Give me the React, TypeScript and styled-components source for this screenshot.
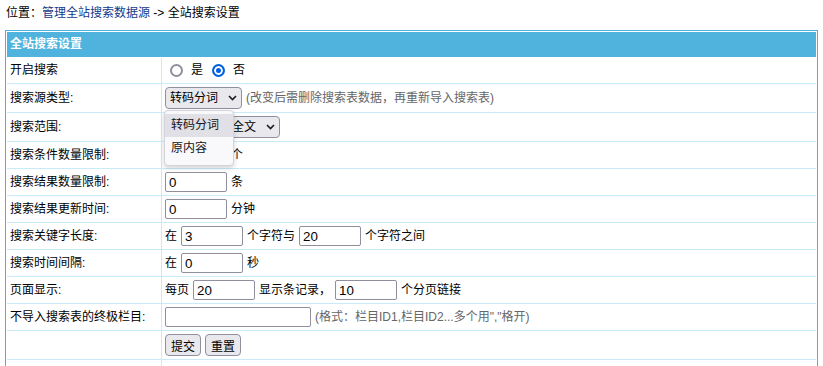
import React from "react";
import styled, { createGlobalStyle } from "styled-components";

const GlobalStyle = createGlobalStyle`
  html, body { margin: 0; padding: 0; background: #fff; }
  body {
    font-family: "Liberation Sans", "Noto Sans CJK SC", sans-serif;
    font-size: 12px;
    color: #000;
  }
  * { box-sizing: border-box; }
`;

const FONT = `"Liberation Sans", "Noto Sans CJK SC", sans-serif`;

const Page = styled.div`
  padding: 0 5px;
`;

const Breadcrumb = styled.div`
  height: 30px;
  padding: 5px 1px 0;
  line-height: 17px;
  white-space: nowrap;
`;

const Crumb = styled.a`
  color: #14398a;
  text-decoration: none;
`;

const Panel = styled.div`
  border: 1px solid #4cb0dc;
  padding: 1px;
  background: #fff;
`;

const Table = styled.table`
  width: 100%;
  border-collapse: separate;
  border-spacing: 0;
`;

const HeadCell = styled.th`
  box-sizing: content-box;
  height: 25px;
  padding: 0 0 0 3px;
  background: #4fb3de;
  color: #fff;
  font-weight: bold;
  font-size: 12px;
  text-align: left;
  line-height: 17px;
  border-bottom: 1px solid #fff;
`;

const LabelCell = styled.td`
  box-sizing: content-box;
  width: 151px;
  padding: 3px 0 3px 3px;
  border-right: 1px solid #c9ebf9;
  border-bottom: 1px solid #c9ebf9;
  line-height: 17px;
  vertical-align: middle;
  white-space: nowrap;
`;

const ValueCell = styled.td`
  padding: 3px;
  border-bottom: 1px solid #c9ebf9;
  vertical-align: middle;
`;

const Field = styled.div`
  display: flex;
  align-items: center;
  gap: 4px;
  min-height: 19px;
  line-height: 17px;
  white-space: nowrap;
`;

const RadioLabel = styled.label`
  display: inline-flex;
  align-items: center;
`;

const Radio = styled.input.attrs({ type: "radio" })`
  appearance: none;
  width: 13px;
  height: 13px;
  margin: 0 8px 0 5px;
  border: 2px solid #8f8f9d;
  border-radius: 50%;
  background: #fff;
  &:checked {
    border-color: #0060df;
    background: #0060df;
    box-shadow: inset 0 0 0 2px #fff;
  }
`;

const SelectWrap = styled.span`
  position: relative;
  display: inline-flex;
`;

const Select = styled.select`
  appearance: none;
  height: 22px;
  margin: 0;
  padding: 0 22px 0 4px;
  border: 1px solid #8f8f9d;
  border-radius: 4px;
  background: #e9e9ed;
  color: #000;
  font: 12px ${FONT};
`;

const Chevron = styled.svg`
  position: absolute;
  right: 5px;
  top: 50%;
  transform: translateY(-50%);
  pointer-events: none;
`;

const Popup = styled.div`
  position: absolute;
  top: calc(100% + 1px);
  left: -1px;
  width: 70px;
  padding: 3px 0 5px;
  background: #f9f9fb;
  border: 1px solid #d4d4dc;
  border-radius: 4px;
  box-shadow: 0 2px 5px rgba(0, 0, 0, 0.18);
  z-index: 10;
`;

const PopupOption = styled.div<{ $active?: boolean }>`
  height: 23px;
  line-height: 23px;
  padding-left: 6px;
  color: #15141a;
  background: ${(p) => (p.$active ? "#e0e0e6" : "transparent")};
`;

const TextInput = styled.input<{ $w?: number }>`
  width: ${(p) => p.$w ?? 62}px;
  height: 20px;
  margin: 0;
  padding: 0 3px;
  border: 1px solid #8f8f9d;
  border-radius: 2px;
  background: #fff;
  color: #000;
  font: 13.33px ${FONT};
`;

const Hint = styled.span`
  color: #666;
`;

const Button = styled.button`
  height: 22px;
  margin: 0;
  padding: 0 5px;
  border: 1px solid #8f8f9d;
  border-radius: 4px;
  background: #e9e9ed;
  color: #000;
  font: 12px ${FONT};
`;

const ChevronIcon = () => (
  <Chevron width="9" height="6" viewBox="0 0 9 6">
    <path d="M1 1 L4.5 4.5 L8 1" fill="none" stroke="#1b1b1f" strokeWidth="1.6" />
  </Chevron>
);

export default function App() {
  return (
    <Page>
      <GlobalStyle />
      <Breadcrumb>
        位置：<Crumb href="#">管理全站搜索数据源</Crumb> -&gt; 全站搜索设置
      </Breadcrumb>
      <Panel>
        <Table>
          <thead>
            <tr>
              <HeadCell colSpan={2}>全站搜索设置</HeadCell>
            </tr>
          </thead>
          <tbody>
            <tr>
              <LabelCell>开启搜索</LabelCell>
              <ValueCell>
                <Field>
                  <RadioLabel>
                    <Radio name="open" />是
                  </RadioLabel>
                  <RadioLabel>
                    <Radio name="open" defaultChecked />否
                  </RadioLabel>
                </Field>
              </ValueCell>
            </tr>
            <tr>
              <LabelCell>搜索源类型:</LabelCell>
              <ValueCell>
                <Field>
                  <SelectWrap>
                    <Select defaultValue="a">
                      <option value="a">转码分词</option>
                      <option value="b">原内容</option>
                    </Select>
                    <ChevronIcon />
                    <Popup>
                      <PopupOption $active>转码分词</PopupOption>
                      <PopupOption>原内容</PopupOption>
                    </Popup>
                  </SelectWrap>
                  <Hint>(改变后需删除搜索表数据，再重新导入搜索表)</Hint>
                </Field>
              </ValueCell>
            </tr>
            <tr>
              <LabelCell>搜索范围:</LabelCell>
              <ValueCell>
                <Field>
                  <SelectWrap>
                    <Select defaultValue="c">
                      <option value="a">标题</option>
                      <option value="c">标题+简介+全文</option>
                    </Select>
                    <ChevronIcon />
                  </SelectWrap>
                </Field>
              </ValueCell>
            </tr>
            <tr>
              <LabelCell>搜索条件数量限制:</LabelCell>
              <ValueCell>
                <Field>
                  <TextInput defaultValue="0" />个
                </Field>
              </ValueCell>
            </tr>
            <tr>
              <LabelCell>搜索结果数量限制:</LabelCell>
              <ValueCell>
                <Field>
                  <TextInput defaultValue="0" />条
                </Field>
              </ValueCell>
            </tr>
            <tr>
              <LabelCell>搜索结果更新时间:</LabelCell>
              <ValueCell>
                <Field>
                  <TextInput defaultValue="0" />分钟
                </Field>
              </ValueCell>
            </tr>
            <tr>
              <LabelCell>搜索关键字长度:</LabelCell>
              <ValueCell>
                <Field>
                  在<TextInput defaultValue="3" />个字符与<TextInput defaultValue="20" />个字符之间
                </Field>
              </ValueCell>
            </tr>
            <tr>
              <LabelCell>搜索时间间隔:</LabelCell>
              <ValueCell>
                <Field>
                  在<TextInput defaultValue="0" />秒
                </Field>
              </ValueCell>
            </tr>
            <tr>
              <LabelCell>页面显示:</LabelCell>
              <ValueCell>
                <Field>
                  每页<TextInput defaultValue="20" />显示条记录，<TextInput defaultValue="10" />个分页链接
                </Field>
              </ValueCell>
            </tr>
            <tr>
              <LabelCell>不导入搜索表的终极栏目:</LabelCell>
              <ValueCell>
                <Field>
                  <TextInput $w={146} defaultValue="" />
                  <Hint>(格式：栏目ID1,栏目ID2...多个用","格开)</Hint>
                </Field>
              </ValueCell>
            </tr>
            <tr>
              <LabelCell />
              <ValueCell>
                <Field>
                  <Button type="submit">提交</Button>
                  <Button type="reset">重置</Button>
                </Field>
              </ValueCell>
            </tr>
            <tr>
              <LabelCell />
              <ValueCell>
                <Field />
              </ValueCell>
            </tr>
          </tbody>
        </Table>
      </Panel>
    </Page>
  );
}
